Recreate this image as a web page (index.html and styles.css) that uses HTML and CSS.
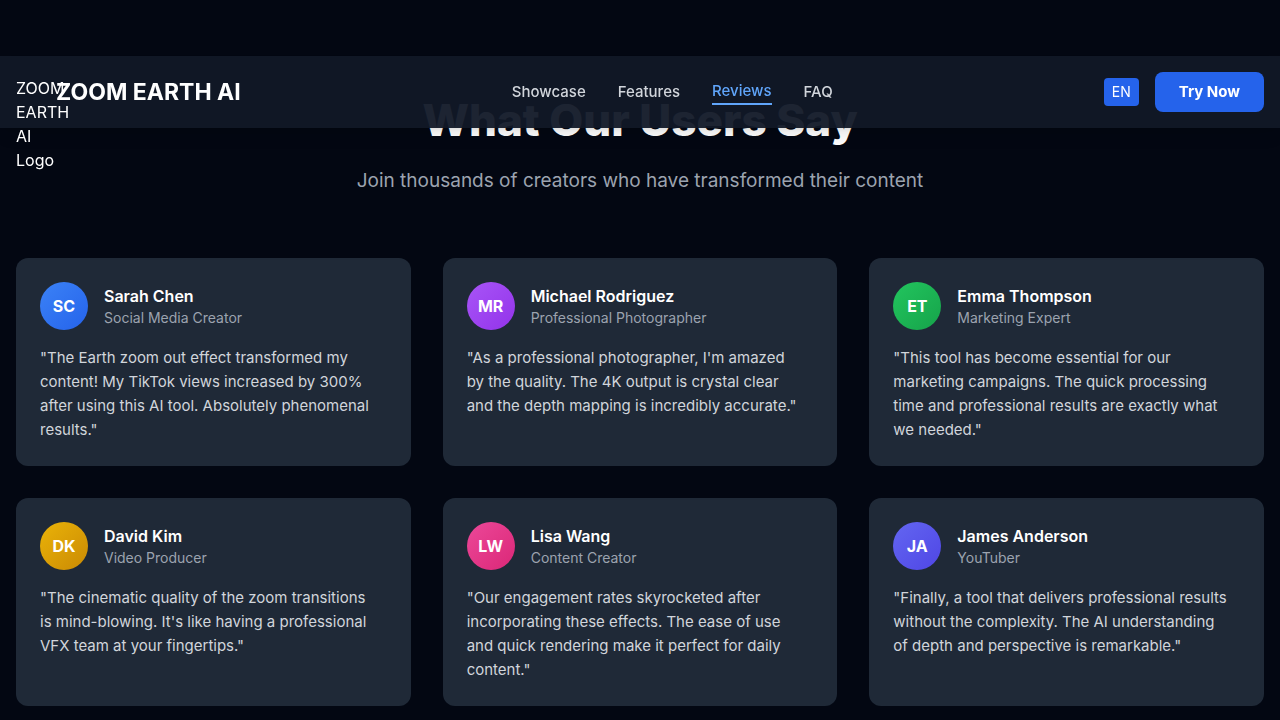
FILE: index.html
```html
<!DOCTYPE html>
<html lang="en">
<head>
<meta charset="utf-8">
<title>ZOOM EARTH AI</title>
<meta name="viewport" content="width=device-width, initial-scale=1">
<link rel="stylesheet" href="styles.css">
</head>
<body>
<header class="header">
  <div class="brand">
    <span class="logo">ZOOM EARTH AI Logo</span>
    <span class="brand-name">ZOOM EARTH AI</span>
  </div>
  <nav class="nav">
    <a href="#showcase">Showcase</a>
    <a href="#features">Features</a>
    <a href="#reviews" class="active">Reviews</a>
    <a href="#faq">FAQ</a>
  </nav>
  <div class="actions">
    <button class="lang" type="button">EN</button>
    <button class="try" type="button">Try Now</button>
  </div>
</header>
<main class="reviews" id="reviews">
  <div class="intro">
    <h2>What Our Users Say</h2>
    <p>Join thousands of creators who have transformed their content</p>
  </div>
  <div class="grid">
    <article class="card">
      <div class="person"><div class="avatar blue">SC</div><div><h3>Sarah Chen</h3><p class="role">Social Media Creator</p></div></div>
      <p class="quote">"The Earth zoom out effect transformed my content! My TikTok views increased by 300% after using this AI tool. Absolutely phenomenal results."</p>
    </article>
    <article class="card">
      <div class="person"><div class="avatar purple">MR</div><div><h3>Michael Rodriguez</h3><p class="role">Professional Photographer</p></div></div>
      <p class="quote">"As a professional photographer, I'm amazed by the quality. The 4K output is crystal clear and the depth mapping is incredibly accurate."</p>
    </article>
    <article class="card">
      <div class="person"><div class="avatar green">ET</div><div><h3>Emma Thompson</h3><p class="role">Marketing Expert</p></div></div>
      <p class="quote">"This tool has become essential for our marketing campaigns. The quick processing time and professional results are exactly what we needed."</p>
    </article>
    <article class="card">
      <div class="person"><div class="avatar yellow">DK</div><div><h3>David Kim</h3><p class="role">Video Producer</p></div></div>
      <p class="quote">"The cinematic quality of the zoom transitions is mind-blowing. It's like having a professional VFX team at your fingertips."</p>
    </article>
    <article class="card">
      <div class="person"><div class="avatar pink">LW</div><div><h3>Lisa Wang</h3><p class="role">Content Creator</p></div></div>
      <p class="quote">"Our engagement rates skyrocketed after incorporating these effects. The ease of use and quick rendering make it perfect for daily content."</p>
    </article>
    <article class="card">
      <div class="person"><div class="avatar indigo">JA</div><div><h3>James Anderson</h3><p class="role">YouTuber</p></div></div>
      <p class="quote">"Finally, a tool that delivers professional results without the complexity. The AI understanding of depth and perspective is remarkable."</p>
    </article>
  </div>
</main>
</body>
</html>
```
FILE: styles.css
```css
* { box-sizing: border-box; margin: 0; padding: 0; }
body {
  background: #030712;
  color: #fff;
  font-family: Inter, "Liberation Sans", sans-serif;
  font-size: 16px;
  line-height: 24px;
}
a { color: inherit; text-decoration: none; }
button { border: 0; color: #fff; font: inherit; cursor: pointer; }
.header {
  position: fixed;
  top: 56px;
  left: 0;
  right: 0;
  z-index: 10;
  padding: 16px;
  display: flex;
  justify-content: space-between;
  align-items: center;
  background: rgba(17, 24, 39, 0.95);
  box-shadow: 0 10px 15px -3px rgba(0, 0, 0, 0.1), 0 4px 6px -4px rgba(0, 0, 0, 0.1);
}
.brand { display: flex; align-items: center; gap: 8px; }
.logo { width: 32px; height: 32px; }
.brand-name { font-size: 23px; line-height: 32px; font-weight: 700; }
.nav { display: flex; align-items: center; gap: 32px; font-size: 15px; font-weight: 500; color: #d1d5db; }
.nav .active { color: #60a5fa; border-bottom: 2px solid #60a5fa; }
.actions { display: flex; align-items: center; gap: 16px; }
.lang { padding: 4px 8px; border-radius: 4px; background: #2563eb; font-size: 14px; line-height: 20px; }
.try { padding: 8px 24px; border-radius: 8px; background: #2563eb; font-size: 15px; font-weight: 700; }
.reviews { padding: 96px 16px 12px; }
.intro { text-align: center; margin-bottom: 64px; }
.intro h2 { font-size: 44px; line-height: 48px; font-weight: 800; margin-bottom: 24px; }
.intro p { font-size: 19px; line-height: 26px; color: #9ca3af; }
.grid { display: grid; grid-template-columns: repeat(3, 1fr); gap: 32px; }
.card { padding: 24px; border-radius: 12px; background: #1f2937; }
.person { display: flex; align-items: center; gap: 16px; margin-bottom: 16px; }
.avatar { display: flex; align-items: center; justify-content: center; width: 48px; height: 48px; border-radius: 50%; font-weight: 700; }
.person h3 { font-size: 16px; line-height: 24px; font-weight: 600; }
.role { font-size: 14px; line-height: 20px; color: #9ca3af; }
.quote { padding-right: 12px; font-size: 15px; color: #d1d5db; }
.blue { background: linear-gradient(to right bottom, #3b82f6, #2563eb); }
.purple { background: linear-gradient(to right bottom, #a855f7, #9333ea); }
.green { background: linear-gradient(to right bottom, #22c55e, #16a34a); }
.yellow { background: linear-gradient(to right bottom, #eab308, #ca8a04); }
.pink { background: linear-gradient(to right bottom, #ec4899, #db2777); }
.indigo { background: linear-gradient(to right bottom, #6366f1, #4f46e5); }
```
